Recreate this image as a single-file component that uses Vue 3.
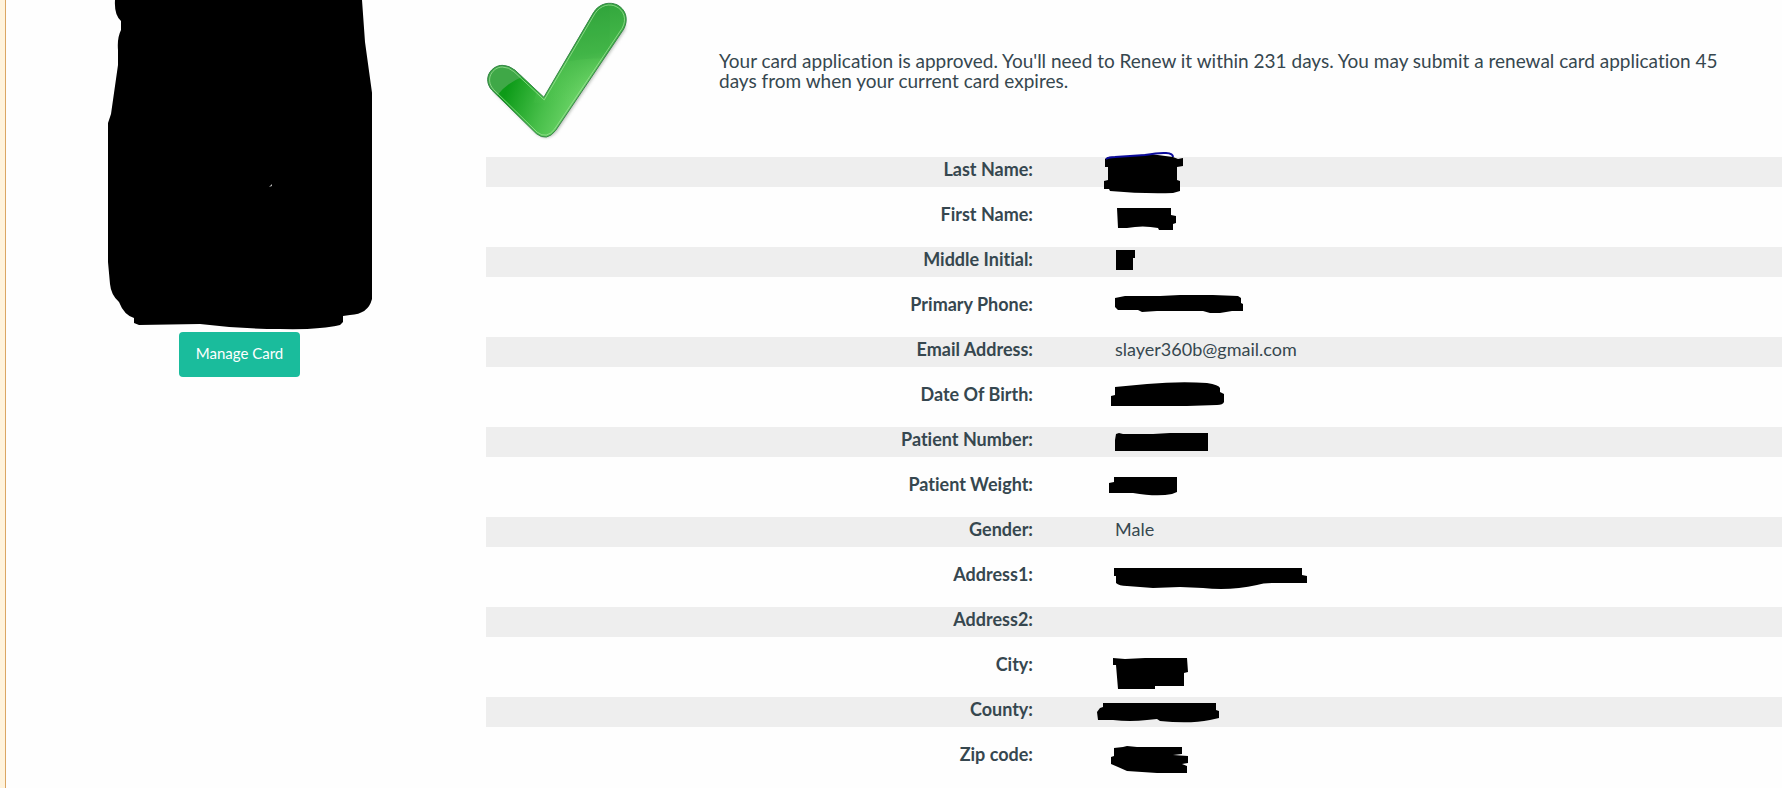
<script setup>
const rows = [
  { label: 'Last Name:', mark: 'M-10 2L-7 0L15 -1L35 -3L58 0L63 2L68 1V9L62 10V23L65 24V34L58 36Q28 37 -5 34L-6 32H-11V24L-7 23V10H-10Z', ink: 'M-9 2Q-6 0 0 0L30 -2Q58 -7 58 0' },
  { label: 'First Name:', mark: 'M2 6H56V13L61 14V21L58 22V28H44L43 26Q28 23 12 26H3Z' },
  { label: 'Middle Initial:', mark: 'M1 3H20V11H18V23H1Z' },
  { label: 'Primary Phone:', mark: 'M0 6L10 4H45L65 3H98L123 4L126 6V11L128 12V19H117L105 21H95L88 19H42L27 20L23 18H3L0 15Z' },
  { label: 'Email Address:', value: 'slayer360b@gmail.com' },
  { label: 'Date Of Birth:', mark: 'M0 5L32 2Q65 -1 92 1Q104 3 105 6V10L109 12V20Q108 23 102 23L72 24H-4V14L0 13Z' },
  { label: 'Patient Number:', mark: 'M1 7L4 6L8 7L20 7L38 7L55 6H93V24H0V13Z' },
  { label: 'Patient Weight:', mark: 'M-1 5H62V20L57 22Q42 25 18 21H-6V11L-1 10Z' },
  { label: 'Gender:', value: 'Male' },
  { label: 'Address1:', mark: 'M-1 6H187V13L192 14V21H158Q148 21 142 23Q115 29 88 26L65 25L38 26L12 24Q4 24 1 21V14H-1Z' },
  { label: 'Address2:' },
  { label: 'City:', mark: 'M-2 6L10 7L30 6H72L73 20L69 21V34H40V37H3L1 13H-2Z' },
  { label: 'County:', mark: 'M-12 6H101V13L104 14V21L95 23Q75 27 45 24L42 22L32 23Q15 25 -2 23H-17L-18 15L-15 11L-12 10Z' },
  { label: 'Zip code:', mark: 'M-1 6L8 5L12 4L22 5H67V12L58 13L73 14V21L67 22L72 24V31H42L12 29L3 25L-4 22V15L-1 14Z' },
]
</script>

<template>
  <div class="page">
    <aside class="side">
      <svg class="card" viewBox="107 0 265 332" aria-hidden="true">
        <path d="M115 0Q114 15 121 21V30Q117 38 118 50V65L111 114L108 123V262L110 284Q111 295 119 302Q124 315 134 318V323L139 325L200 324Q240 329 280 329Q320 330 340 325L343 322V316L350 315Q373 314 373 290V100L365 42L362 0Z" />
        <path d="M269 187l3-3v2z" fill="#bbb" />
      </svg>
      <button type="button" class="manage">Manage Card</button>
    </aside>

    <main class="main">
      <section class="status">
        <svg class="check" viewBox="48 0 430 420" aria-hidden="true">
          <defs>
            <linearGradient id="base" gradientUnits="userSpaceOnUse" x1="110" y1="270" x2="320" y2="350">
              <stop offset="0" stop-color="#0d9b18" />
              <stop offset="0.55" stop-color="#48bf4a" />
              <stop offset="1" stop-color="#70d66b" />
            </linearGradient>
            <linearGradient id="upper" gradientUnits="userSpaceOnUse" x1="340" y1="30" x2="380" y2="290">
              <stop offset="0" stop-color="#34a83e" />
              <stop offset="0.5" stop-color="#46b94a" />
              <stop offset="1" stop-color="#5bc957" stop-opacity="0" />
            </linearGradient>
            <clipPath id="shape">
              <path d="M66 271C35 235 65 196 97 196Q118 196 136 211L222 292L371 38C390 7 422 5 442 14C468 27 478 57 462 87L258 391Q231 427 199 401Z" />
            </clipPath>
            <filter id="soft" x="-10%" y="-10%" width="120%" height="120%">
              <feGaussianBlur stdDeviation="4" />
            </filter>
          </defs>
          <path d="M70 275L222 297L374 43C410 7 480 25 466 91L262 395Q235 426 203 405Z" fill="#8b978b" opacity=".6" filter="url(#soft)" />
          <g clip-path="url(#shape)">
            <path d="M48 0H478V420H48Z" fill="url(#base)" />
            <path d="M290 0H478V310H190Z" fill="url(#upper)" />
            <path d="M48 180H160L158 230Q112 248 82 286H48Z" fill="#3fa847" />
            <path d="M280 188Q330 174 420 175V0H280Z" fill="#208f30" opacity=".1" />
          </g>
          <path d="M66 271C35 235 65 196 97 196Q118 196 136 211L222 292L371 38C390 7 422 5 442 14C468 27 478 57 462 87L258 391Q231 427 199 401Z" fill="none" stroke="#39854a" stroke-width="3" />
          <path d="M71 269C43 238 68 201 97 201Q116 201 132 215L223 300L375 41C393 13 421 10 439 19C462 30 473 57 457 85L254 388Q230 419 202 397Z" fill="none" stroke="#a1e09b" stroke-width="3" opacity=".75" />
        </svg>
        <p class="message">Your card application is approved. You'll need to Renew it within 231 days. You may submit a renewal card application 45 days from when your current card expires.</p>
      </section>

      <dl class="details">
        <div v-for="row in rows" :key="row.label" class="row">
          <dt>{{ row.label }}</dt>
          <dd>
            <svg v-if="row.mark" class="mark" viewBox="0 0 200 30" aria-hidden="true">
              <path :d="row.mark" />
              <path v-if="row.ink" :d="row.ink" fill="none" stroke="#0b0b9c" stroke-width="2" />
            </svg>
            <template v-else>{{ row.value }}</template>
          </dd>
        </div>
      </dl>
    </main>
  </div>
</template>

<style>
body {
  margin: 0;
  background: #fefefe;
}
</style>

<style scoped>
.page {
  display: flex;
  min-height: 100vh;
  box-sizing: border-box;
  border-left: 5px solid #fff3dc;
  font-family: Lato, "Liberation Sans", sans-serif;
  font-size: 18px;
  font-variant-ligatures: none;
  line-height: 20px;
  color: #36474f;
}
.side {
  flex: 0 0 480px;
  box-sizing: border-box;
  border-left: 1px solid #dba663;
  display: flex;
  flex-direction: column;
  align-items: center;
  padding-right: 12px;
}
.card {
  width: 265px;
  height: 332px;
}
.manage {
  height: 45px;
  padding: 0 17px 4px;
  border: 0;
  border-radius: 4px;
  background: #1abc9c;
  color: #fff;
  font: inherit;
  font-size: 15px;
}
.main {
  flex: 1;
  min-width: 0;
  padding-left: 1px;
}
.status {
  display: flex;
  align-items: flex-start;
  padding-right: 56px;
  margin-bottom: 17px;
}
.check {
  flex: none;
  width: 143px;
  height: 140px;
}
.message {
  margin: 51px 0 0 90px;
  font-size: 19px;
}
.details {
  margin: 0;
  display: grid;
  gap: 15px;
}
.row {
  display: grid;
  grid-template-columns: 547fr 667fr;
  column-gap: 82px;
  height: 30px;
}
.row:nth-child(odd) {
  background: #eee;
}
dt {
  padding-top: 2px;
  text-align: right;
  font-weight: bold;
}
dd {
  margin: 0;
  padding-top: 2px;
}
.mark {
  display: block;
  width: 200px;
  height: 30px;
  margin-top: -2px;
  overflow: visible;
}
</style>
